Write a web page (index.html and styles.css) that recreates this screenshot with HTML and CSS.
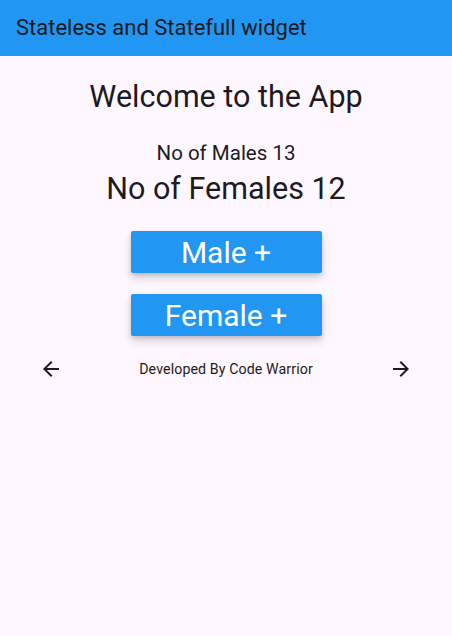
FILE: index.html
```html
<!DOCTYPE html>
<html>
<head>
<meta charset="utf-8">
<link rel="stylesheet" href="styles.css">
</head>
<body>
<header class="appbar"><span class="title">Stateless and Statefull widget</span></header>
<main class="content">
  <div class="welcome">Welcome to the App</div>
  <div class="males">No of Males 13</div>
  <div class="females">No of Females 12</div>
  <button class="btn btn-male">Male +</button>
  <button class="btn btn-female">Female +</button>
  <div class="footer">
    <span class="icon"><svg width="24" height="24" viewBox="0 0 24 24"><path d="M20 11H7.830l5.590-5.590L12 4l-8 8 8 8 1.410-1.410L7.830 13H20v-2z" fill="#1d1b20"/></svg></span>
    <span class="dev">Developed By Code Warrior</span>
    <span class="icon"><svg width="24" height="24" viewBox="0 0 24 24"><path d="M12 4l-1.410 1.410L16.170 11H4v2h12.170l-5.580 5.590L12 20l8-8z" fill="#1d1b20"/></svg></span>
  </div>
</main>
</body>
</html>
```
FILE: styles.css
```css
html, body { margin: 0; padding: 0; }
body {
  width: 452px;
  height: 636px;
  background: #fef7ff;
  font-family: Roboto, "Liberation Sans", sans-serif;
  color: #1d1b20;
  overflow: hidden;
}
.appbar {
  height: 56px;
  background: #2196f3;
  display: flex;
  align-items: center;
  padding-left: 16px;
}
.title { font-size: 22px; line-height: 28px; }
.content {
  display: flex;
  flex-direction: column;
  align-items: center;
}
.welcome { font-size: 30.5px; line-height: 36px; margin-top: 23px; }
.males { font-size: 20.5px; line-height: 28px; margin-top: 24px; }
.females { font-size: 30.5px; line-height: 36px; margin-top: 4px; }
.btn {
  width: 191px;
  height: 42px;
  border: none;
  border-radius: 2px;
  background: #2196f3;
  color: #fff;
  font-family: inherit;
  font-size: 30px;
  padding: 0;
  box-shadow: 0 5px 10px rgba(0,0,0,0.16), 0 2px 4px rgba(0,0,0,0.12);
}
.btn-male { margin-top: 24px; }
.btn-female { margin-top: 21px; }
.footer {
  width: 374px;
  margin-top: 21px;
  display: flex;
  align-items: center;
  justify-content: space-between;
}
.icon { width: 24px; height: 24px; display: flex; }
.dev { font-size: 14.2px; line-height: 20px; letter-spacing: 0.1px; }
```
